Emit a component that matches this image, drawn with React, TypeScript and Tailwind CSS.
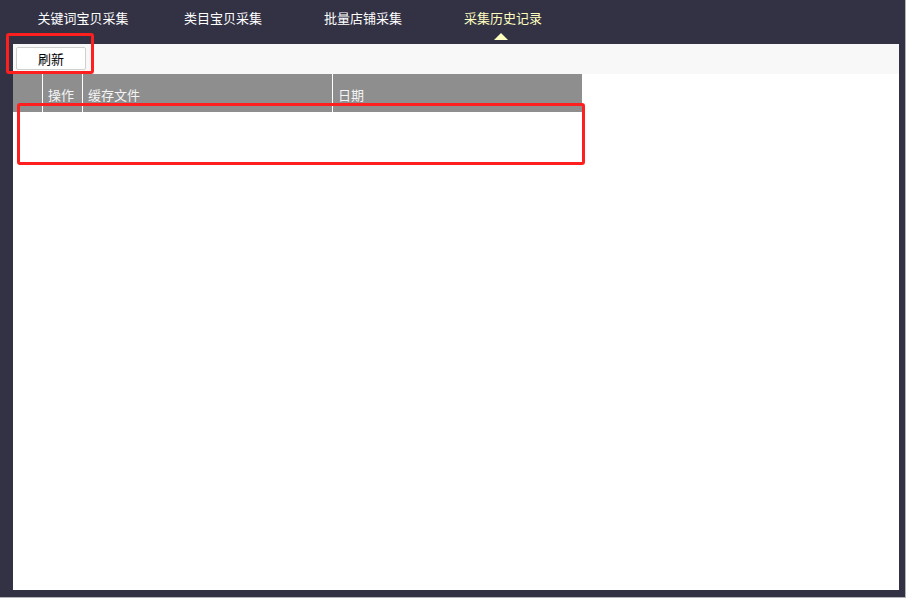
export default function App() {
  const tabs = ["关键词宝贝采集", "类目宝贝采集", "批量店铺采集", "采集历史记录"]
  const active = 3

  return (
    <div
      className="relative w-[906px] h-[598px] bg-[#333245] border-r border-b border-[#b4b4b8] flex flex-col text-[13px]"
      style={{ fontFamily: '"Microsoft YaHei", "Noto Sans CJK SC", "Noto Sans", sans-serif' }}
    >
      {/* Tabs */}
      <div className="h-[44px] flex pl-[13px]">
        {tabs.map((t, i) => (
          <div
            key={t}
            className={`relative w-[140px] flex justify-center pt-[8px] ${
              i === active ? "text-[#ffffc0]" : "text-white"
            }`}
          >
            <span className="leading-[20px]">{t}</span>
            {i === active && (
              <div className="absolute left-[61px] top-[33px] w-0 h-0 border-l-[7px] border-r-[7px] border-b-[7px] border-l-transparent border-r-transparent border-b-[#ffffc0]" />
            )}
          </div>
        ))}
      </div>

      {/* Content */}
      <div className="ml-[13px] w-[886px] h-[546px] bg-white flex flex-col">
        <div className="h-[30px] bg-[#f8f8f8] pl-[3px] pt-[3px]">
          <button className="w-[70px] h-[23px] bg-white border border-[#cfcfcf] rounded-[2px] text-black text-[13px] leading-none">
            刷新
          </button>
        </div>
        <div className="w-[569px] h-[38px] bg-[#8e8e8e] flex text-[#f4f4f4]">
          <div className="w-[30px] border-r border-white" />
          <div className="w-[40px] border-r border-white flex items-center pl-[5px] pt-[4px]">操作</div>
          <div className="w-[250px] border-r border-white flex items-center pl-[5px] pt-[4px]">缓存文件</div>
          <div className="flex-1 flex items-center pl-[5px] pt-[4px]">日期</div>
        </div>
      </div>

      {/* annotation boxes */}
      <div className="absolute left-[6px] top-[33px] w-[88px] h-[41px] border-[3px] border-[#ff1f1f] rounded-[3px]" />
      <div className="absolute left-[17px] top-[103px] w-[568px] h-[62px] border-[3px] border-[#ff1f1f] rounded-[3px]" />
    </div>
  )
}
